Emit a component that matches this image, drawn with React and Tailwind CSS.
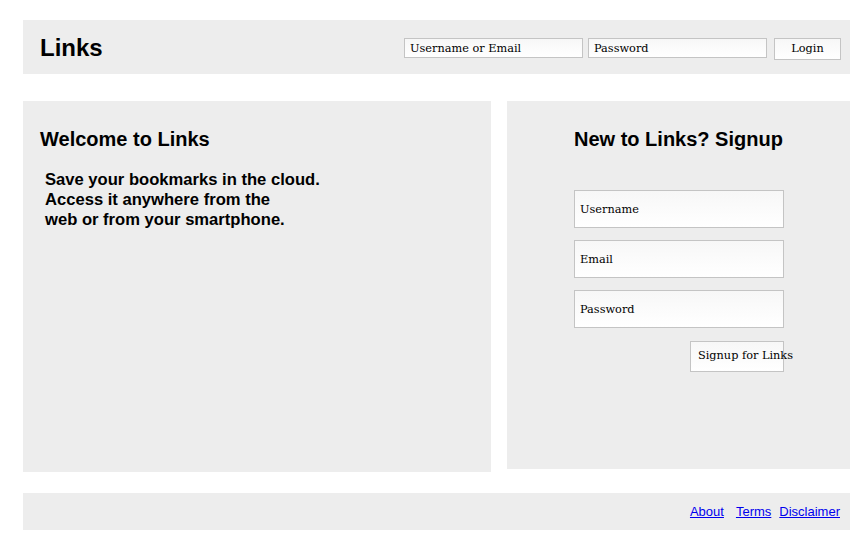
export default function App() {
  const inputCls =
    "border border-[#c4c4c4] bg-gradient-to-b from-[#f7f7f7] to-white font-['DejaVu_Serif',serif] text-[11.3px] text-black placeholder:text-black outline-none";

  return (
    <div className="w-[868px] h-[550px] bg-white font-['Liberation_Sans',Arial,sans-serif] text-black">
      <header className="mt-5 ml-[23px] w-[827px] h-[54px] bg-[#ededed] flex items-start pl-[17px] pr-[9px] pt-[18px]">
        <h1 className="text-[24px] font-bold leading-none mt-[-2px]">Links</h1>
        <div className="ml-auto flex items-start gap-[5px]">
          <input className={`${inputCls} w-[179px] h-[20px] px-[5px]`} placeholder="Username or Email" />
          <input className={`${inputCls} w-[179px] h-[20px] px-[5px]`} type="password" placeholder="Password" />
          <button className={`${inputCls} ml-[2px] w-[67px] h-[22px]`}>Login</button>
        </div>
      </header>

      <main className="mt-[27px] ml-[23px] flex gap-[16px] items-start">
        <section className="w-[468px] h-[371px] bg-[#ededed] pl-[17px] pt-[26px]">
          <h2 className="text-[20px] font-bold leading-[24px]">Welcome to Links</h2>
          <p className="mt-[19px] ml-[5px] text-[16.6px] font-bold leading-[20px]">
            Save your bookmarks in the cloud.
            <br />
            Access it anywhere from the
            <br />
            web or from your smartphone.
          </p>
        </section>

        <section className="w-[343px] h-[368px] bg-[#ededed] pl-[67px] pt-[26px]">
          <h2 className="text-[20px] font-bold leading-[24px]">New to Links? Signup</h2>
          <form className="mt-[39px] w-[210px] flex flex-col gap-[12px]">
            <input className={`${inputCls} h-[38px] px-[5px]`} placeholder="Username" />
            <input className={`${inputCls} h-[38px] px-[5px]`} placeholder="Email" />
            <input className={`${inputCls} h-[38px] px-[5px]`} type="password" placeholder="Password" />
            <div className="flex justify-end mt-[1px]">
              <button
                type="button"
                className={`${inputCls} w-[94px] h-[31px] pl-[7px] text-left whitespace-nowrap overflow-visible`}
              >
                Signup for Links
              </button>
            </div>
          </form>
        </section>
      </main>

      <footer className="mt-[21px] ml-[23px] w-[827px] h-[37px] bg-[#ededed] flex items-center justify-end pr-[10px] text-[13px]">
        <a href="#" className="text-[#0000ee] underline">About</a>
        <a href="#" className="ml-[12px] text-[#0000ee] underline">Terms</a>
        <a href="#" className="ml-[8px] text-[#0000ee] underline">Disclaimer</a>
      </footer>
    </div>
  );
}
